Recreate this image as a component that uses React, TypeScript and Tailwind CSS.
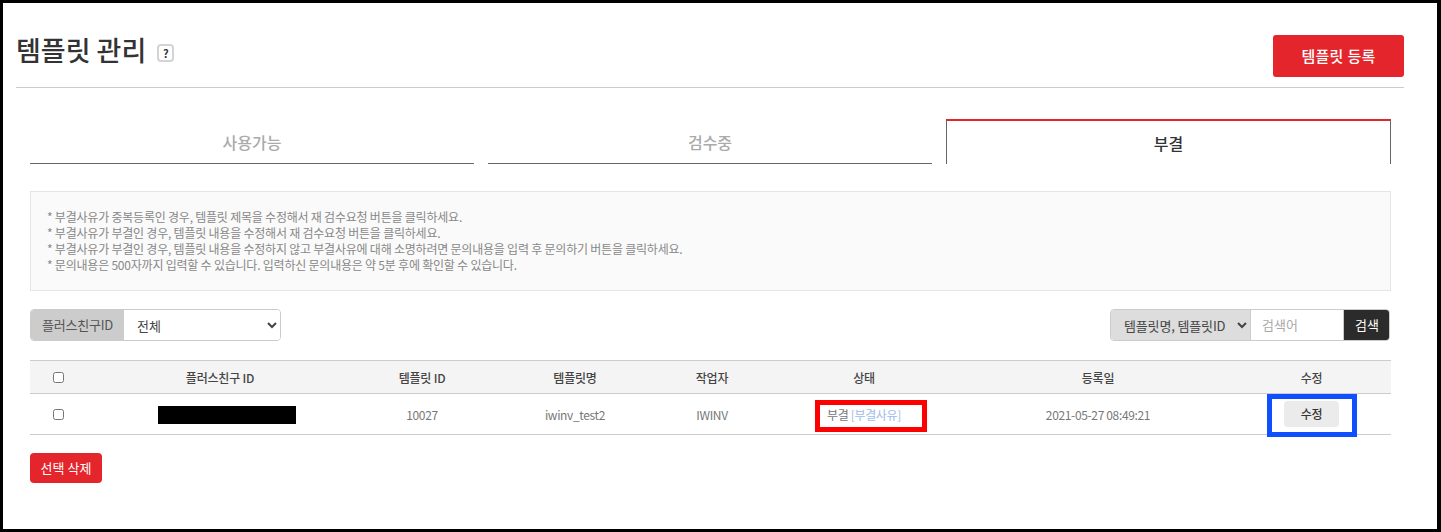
const TABS = [
  { label: "사용가능", active: false },
  { label: "검수중", active: false },
  { label: "부결", active: true },
];

const NOTICES = [
  "* 부결사유가 중복등록인 경우, 템플릿 제목을 수정해서 재 검수요청 버튼을 클릭하세요.",
  "* 부결사유가 부결인 경우, 템플릿 내용을 수정해서 재 검수요청 버튼을 클릭하세요.",
  "* 부결사유가 부결인 경우, 템플릿 내용을 수정하지 않고 부결사유에 대해 소명하려면 문의내용을 입력 후 문의하기 버튼을 클릭하세요.",
  "* 문의내용은 500자까지 입력할 수 있습니다. 입력하신 문의내용은 약 5분 후에 확인할 수 있습니다.",
];

const COLUMNS = ["플러스친구 ID", "템플릿 ID", "템플릿명", "작업자", "상태", "등록일", "수정"];

export default function App() {
  return (
    <div className="relative h-[532px] overflow-hidden border-[3px] border-r-4 border-black bg-white font-['Noto_Sans_CJK_KR','Noto_Sans',sans-serif] text-[#666]">
      <div className="pr-[33px] pl-[13px]">
        <header className="flex h-[85px] items-start justify-between border-b border-[#ccc]">
          <div className="mt-[26px] flex items-center">
            <h1 className="text-[27px] leading-[42px] font-medium text-[#333]">템플릿 관리</h1>
            <span className="mt-[6px] ml-[11px] flex h-[18px] w-[17px] items-center justify-center rounded-[4px] border-2 border-[#d4d4d4] text-[11px] leading-none font-bold text-[#333]">?</span>
          </div>
          <button className="mt-[32px] h-[42px] w-[131px] rounded-[3px] bg-[#e4252b] text-[15px] font-medium tracking-[0.3px] text-white">템플릿 등록</button>
        </header>
      </div>

      <div className="mr-[46px] ml-[27px]">
        <nav className="mt-[31px] grid grid-cols-[444px_444px_445px] gap-x-[14px]">
          {TABS.map((tab) =>
            tab.active ? (
              <div key={tab.label} className="flex h-[45px] items-center justify-center border-x border-t-2 border-x-[#666] border-t-[#e4252b] pt-px text-[16px] font-medium text-[#333]">{tab.label}</div>
            ) : (
              <div key={tab.label} className="flex h-[45px] items-center justify-center border-b border-[#666] pt-[2px] text-[16px] font-medium text-[#aaa]">{tab.label}</div>
            ),
          )}
        </nav>

        <section className="mt-[27px] h-[100px] border border-[#e5e5e5] bg-[#fafafa] px-[16px] pt-[17px] text-[12px] leading-4 tracking-[-0.22px] text-[#888]">
          {NOTICES.map((line) => (
            <p key={line}>{line}</p>
          ))}
        </section>

        <div className="mt-[18px] flex items-center justify-between pr-px">
          <div className="flex h-[32px] w-[251px] overflow-hidden rounded border border-[#ccc]">
            <span className="flex w-[93px] items-center justify-center bg-[#ccc] text-[13px] tracking-[-0.2px] text-[#555]">플러스친구ID</span>
            <select className="flex-1 bg-white pl-[9px] text-[13px] text-[#444] outline-none">
              <option>전체</option>
            </select>
          </div>
          <div className="flex h-[32px] w-[280px] overflow-hidden rounded border border-[#ccc]">
            <select className="w-[139px] bg-[#ddd] pl-[9px] text-[13px] tracking-[-0.15px] text-[#444] outline-none">
              <option>템플릿명, 템플릿ID</option>
            </select>
            <input placeholder="검색어" className="w-[94px] border-x border-[#ccc] bg-white px-[11px] text-[13px] outline-none placeholder:text-[#aaa]" />
            <button className="-my-px -mr-px flex-1 rounded-r bg-[#2b2b2b] text-[13px] text-white">검색</button>
          </div>
        </div>

        <table className="mt-[19px] w-[1361px] table-fixed border-collapse text-[12px]">
          <colgroup>
            <col className="w-[56px]" />
            <col className="w-[268px]" />
            <col className="w-[136px]" />
            <col className="w-[170px]" />
            <col className="w-[104px]" />
            <col className="w-[200px]" />
            <col className="w-[268px]" />
            <col className="w-[159px]" />
          </colgroup>
          <thead>
            <tr className="h-[33px] border-y border-[#ccc] bg-[#f4f4f4] text-[#444]">
              <th className="p-0 align-middle"><input type="checkbox" className="mx-auto block h-[11px] w-[11px]" /></th>
              {COLUMNS.map((col) => (
                <th key={col} className="p-0 pt-px font-medium tracking-[-0.2px]">{col}</th>
              ))}
            </tr>
          </thead>
          <tbody>
            <tr className="h-[41px] border-b border-[#ccc] text-center tracking-[-0.35px] text-[#777]">
              <td className="p-0"><input type="checkbox" className="mx-auto block h-[11px] w-[11px]" /></td>
              <td className="p-0 pt-px"><span className="ml-[72px] block h-[18px] w-[138px] bg-black" /></td>
              <td className="p-0 pt-px">10027</td>
              <td className="p-0 pt-px">iwinv_test2</td>
              <td className="p-0 pt-px">IWINV</td>
              <td className="p-0 pt-px">부결 <span className="text-[#9dbcea]">[부결사유]</span></td>
              <td className="p-0 pt-px">2021-05-27 08:49:21</td>
              <td className="p-0">
                <button className="h-[26px] w-[55px] rounded bg-[#ebebeb] font-medium text-[#333]">수정</button>
              </td>
            </tr>
          </tbody>
        </table>

        <button className="mt-[18px] h-[30px] w-[72px] rounded bg-[#e4252b] text-[13px] text-white">선택 삭제</button>
      </div>

      {/* annotation boxes drawn over the capture */}
      <div className="absolute top-[397px] left-[812px] h-[32px] w-[112px] border-[5px] border-[#ff0000]" />
      <div className="absolute top-[391px] left-[1264px] h-[43px] w-[90px] border-[5px] border-[#0f4fff]" />
    </div>
  );
}
